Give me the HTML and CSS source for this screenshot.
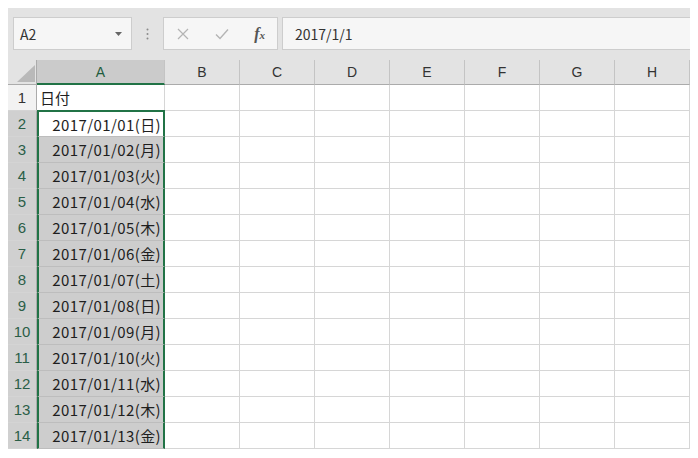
FILE: index.html
```html
<!DOCTYPE html>
<html lang="ja">
<head>
    <meta charset="utf-8"/>
    <title>Sheet</title>
    <link rel="stylesheet" href="styles.css">
</head>
<body>
<div class="excel">
    <div class="toolbar">
        <div class="namebox">
            <span>A2</span>
            <svg class="drop" width="7" height="4" viewBox="0 0 7 4"><path d="M0 0H7L3.5 4Z" fill="#666"/></svg>
        </div>
        <div class="sep">
            <svg width="3" height="12" viewBox="0 0 3 12"><circle cx="1.5" cy="1.5" r="1" fill="#8a8a8a"/><circle cx="1.5" cy="6" r="1" fill="#8a8a8a"/><circle cx="1.5" cy="10.5" r="1" fill="#8a8a8a"/></svg>
        </div>
        <div class="fbtns">
            <svg width="12" height="12" viewBox="0 0 12 12"><path d="M1 1L11 11M11 1L1 11" stroke="#b4b4b4" stroke-width="1.2" fill="none"/></svg>
            <svg width="14" height="12" viewBox="0 0 14 12"><path d="M1 6.5L5 10.5L13 1.5" stroke="#b4b4b4" stroke-width="1.4" fill="none"/></svg>
            <span class="fx">f<small>x</small></span>
        </div>
        <div class="fbar">2017/1/1</div>
    </div>

    <div class="sheet">
        <div class="corner"><svg width="18" height="17" viewBox="0 0 18 17"><path d="M18 0V17H0Z" fill="#b9b9b9"/></svg></div>
        <div class="hd hdsel">A</div>
        <div class="hd">B</div>
        <div class="hd">C</div>
        <div class="hd">D</div>
        <div class="hd">E</div>
        <div class="hd">F</div>
        <div class="hd">G</div>
        <div class="hd">H</div>

        <div class="rh">1</div>
        <div class="c txt">日付</div>
        <div class="c"></div><div class="c"></div><div class="c"></div><div class="c"></div><div class="c"></div><div class="c"></div><div class="c"></div>

        <div class="rh rhsel">2</div>
        <div class="c sel first">2017/01/01(日)</div>
        <div class="c"></div><div class="c"></div><div class="c"></div><div class="c"></div><div class="c"></div><div class="c"></div><div class="c"></div>

        <div class="rh rhsel">3</div>
        <div class="c sel shade">2017/01/02(月)</div>
        <div class="c"></div><div class="c"></div><div class="c"></div><div class="c"></div><div class="c"></div><div class="c"></div><div class="c"></div>

        <div class="rh rhsel">4</div>
        <div class="c sel shade">2017/01/03(火)</div>
        <div class="c"></div><div class="c"></div><div class="c"></div><div class="c"></div><div class="c"></div><div class="c"></div><div class="c"></div>

        <div class="rh rhsel">5</div>
        <div class="c sel shade">2017/01/04(水)</div>
        <div class="c"></div><div class="c"></div><div class="c"></div><div class="c"></div><div class="c"></div><div class="c"></div><div class="c"></div>

        <div class="rh rhsel">6</div>
        <div class="c sel shade">2017/01/05(木)</div>
        <div class="c"></div><div class="c"></div><div class="c"></div><div class="c"></div><div class="c"></div><div class="c"></div><div class="c"></div>

        <div class="rh rhsel">7</div>
        <div class="c sel shade">2017/01/06(金)</div>
        <div class="c"></div><div class="c"></div><div class="c"></div><div class="c"></div><div class="c"></div><div class="c"></div><div class="c"></div>

        <div class="rh rhsel">8</div>
        <div class="c sel shade">2017/01/07(土)</div>
        <div class="c"></div><div class="c"></div><div class="c"></div><div class="c"></div><div class="c"></div><div class="c"></div><div class="c"></div>

        <div class="rh rhsel">9</div>
        <div class="c sel shade">2017/01/08(日)</div>
        <div class="c"></div><div class="c"></div><div class="c"></div><div class="c"></div><div class="c"></div><div class="c"></div><div class="c"></div>

        <div class="rh rhsel">10</div>
        <div class="c sel shade">2017/01/09(月)</div>
        <div class="c"></div><div class="c"></div><div class="c"></div><div class="c"></div><div class="c"></div><div class="c"></div><div class="c"></div>

        <div class="rh rhsel">11</div>
        <div class="c sel shade">2017/01/10(火)</div>
        <div class="c"></div><div class="c"></div><div class="c"></div><div class="c"></div><div class="c"></div><div class="c"></div><div class="c"></div>

        <div class="rh rhsel">12</div>
        <div class="c sel shade">2017/01/11(水)</div>
        <div class="c"></div><div class="c"></div><div class="c"></div><div class="c"></div><div class="c"></div><div class="c"></div><div class="c"></div>

        <div class="rh rhsel">13</div>
        <div class="c sel shade">2017/01/12(木)</div>
        <div class="c"></div><div class="c"></div><div class="c"></div><div class="c"></div><div class="c"></div><div class="c"></div><div class="c"></div>

        <div class="rh rhsel">14</div>
        <div class="c sel shade">2017/01/13(金)</div>
        <div class="c"></div><div class="c"></div><div class="c"></div><div class="c"></div><div class="c"></div><div class="c"></div><div class="c"></div>
    </div>
</div>
</body>
</html>
```

FILE: styles.css
```css
body
{
    margin: 8px;
    background: #ffffff;
    font-family: "Noto Sans CJK JP", "Liberation Sans", sans-serif;
    color: #1e1e1e;
}

.excel
{
    width: 682px;
}

.toolbar
{
    height: 52px;
    box-sizing: border-box;
    padding: 9px 0 0 5px;
    background: #e3e3e3;
    display: flex;
    align-items: flex-start;
}

.namebox
{
    width: 119px;
    height: 33px;
    box-sizing: border-box;
    border: 1px solid #cdcdcd;
    background: #f6f6f6;
    display: flex;
    align-items: center;
    justify-content: space-between;
    padding: 0 9px 0 6px;
    font-size: 14px;
    color: #333333;
}

.sep
{
    width: 31px;
    height: 33px;
    display: flex;
    align-items: center;
    justify-content: center;
}

.fbtns
{
    width: 115px;
    height: 33px;
    box-sizing: border-box;
    border: 1px solid #cdcdcd;
    background: #f6f6f6;
    display: flex;
    align-items: center;
    justify-content: space-between;
    padding: 0 12px 0 13px;
}

.fx
{
    font-family: "Liberation Serif", serif;
    font-style: italic;
    font-weight: bold;
    font-size: 16px;
    color: #555555;
}

.fx small
{
    font-size: 11px;
}

.fbar
{
    flex: 1;
    height: 33px;
    margin-left: 4px;
    box-sizing: border-box;
    border: 1px solid #cdcdcd;
    border-right: none;
    background: #f6f6f6;
    padding: 0 12px;
    display: flex;
    align-items: center;
    font-size: 14px;
    color: #333333;
}

.sheet
{
    display: grid;
    grid-template-columns: 29px 128px repeat(7, 75px);
    grid-template-rows: 25px repeat(14, 26px);
}

.corner
{
    background: #e3e3e3;
    border-right: 1px solid #ababab;
    border-bottom: 1px solid #ababab;
    display: flex;
    align-items: flex-end;
    justify-content: flex-end;
    padding: 0 1px 2px 0;
}

.hd
{
    background: #e3e3e3;
    border-bottom: 1px solid #ababab;
    border-right: 1px solid #c4c4c4;
    display: flex;
    align-items: center;
    justify-content: center;
    font-family: "Liberation Sans", sans-serif;
    font-size: 14px;
    color: #333333;
}

.hdsel
{
    background: #cbcbcb;
    border-bottom: 2px solid #217346;
    color: #1f5c3e;
}

.rh
{
    background: #f2f2f2;
    border-right: 1px solid #ababab;
    border-bottom: 1px solid #d4d4d4;
    display: flex;
    align-items: center;
    justify-content: center;
    font-family: "Liberation Sans", sans-serif;
    font-size: 15px;
    color: #333333;
}

.rhsel
{
    background: #d0d0d0;
    color: #2a5e47;
}

.c
{
    border-right: 1px solid #d6d6d6;
    border-bottom: 1px solid #d6d6d6;
    display: flex;
    align-items: center;
    font-size: 15px;
}

.txt
{
    padding-left: 3px;
}

.sel
{
    border-left: 2px solid #217346;
    border-right: 2px solid #217346;
    justify-content: flex-end;
    padding-right: 2px;
    letter-spacing: 0.4px;
    border-bottom-color: #bdbdbd;
}

.first
{
    border-top: 2px solid #217346;
    margin-top: -1px;
}

.shade
{
    background: #cdcdcd;
}
```
